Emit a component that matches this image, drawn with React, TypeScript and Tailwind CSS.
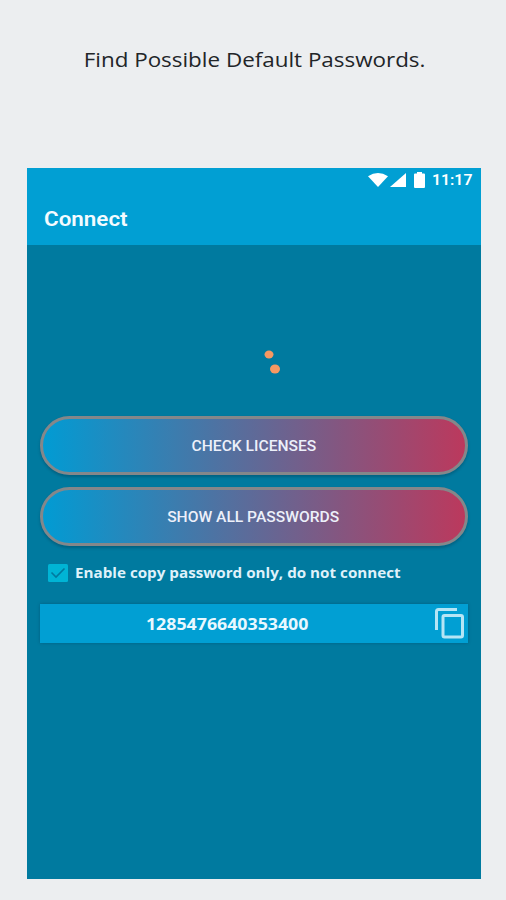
const StatusBar = () => {
  return (
    <div className="flex h-6 items-center justify-end pr-2 text-white">
      <svg width="20" height="14" viewBox="0 0 20 14" fill="currentColor">
        <path d="M0 3.2Q10 -3 20 3.2L10 14Z" />
      </svg>
      <svg
        className="ml-0.5"
        width="16"
        height="14"
        viewBox="0 0 16 14"
        fill="currentColor"
      >
        <path d="M0 14L16 0V14Z" />
      </svg>
      <svg
        className="ml-2"
        width="11"
        height="16"
        viewBox="0 0 11 16"
        fill="currentColor"
      >
        <path d="M3 0H8V1.5H10Q11 1.5 11 2.5V15Q11 16 10 16H1Q0 16 0 15V2.5Q0 1.5 1 1.5H3Z" />
      </svg>
      <span className="ml-[7px] w-[41px] origin-left scale-x-[1.09] pt-0.5 text-[14.5px] leading-6 font-semibold whitespace-nowrap">
        11:17
      </span>
    </div>
  );
};

const GradientButton = ({ text }: { text: string }) => {
  return (
    <button className="h-[59px] w-full rounded-full border-[3px] border-[#84878a] bg-linear-to-r/srgb from-[#009cd4] to-[#bd385c] bg-origin-border pt-0.5 text-[14px] font-medium text-[#edf0fa] shadow-[0_2px_3px_rgba(0,40,60,0.3)]">
      <span className="inline-block scale-x-[1.115]">{text}</span>
    </button>
  );
};

const App = () => {
  return (
    <div className="flex h-[900px] w-[506px] flex-col bg-[#eceef0] font-['Roboto',sans-serif]">
      <h1 className="h-[74px] pt-[46px] pl-[3px] text-center font-['Open_Sans',sans-serif] text-[20px] leading-7 text-[#222528]">
        <span className="inline-block scale-x-[1.12] whitespace-nowrap">
          Find Possible Default Passwords.
        </span>
      </h1>

      <div className="mt-[94px] ml-[26.5px] h-[711px] w-[454px] bg-[#007a9f]">
        <header className="h-[77px] bg-[#019fd3]">
          <StatusBar />
          <h2 className="pt-[13px] pl-[17px] text-[20px] leading-7 font-semibold text-[#f3fbff]">
            <span className="inline-block origin-left scale-x-[1.12]">
              Connect
            </span>
          </h2>
        </header>

        <main className="px-[13px]">
          <div className="flex h-[171px] justify-center pt-[104px] pl-[38px]">
            <svg width="18" height="26" viewBox="0 0 18 26" fill="#f79862">
              <ellipse cx="5" cy="5.5" rx="4.5" ry="4" />
              <ellipse cx="11" cy="20" rx="5" ry="4.5" />
            </svg>
          </div>

          <div className="flex flex-col gap-3">
            <GradientButton text="CHECK LICENSES" />
            <GradientButton text="SHOW ALL PASSWORDS" />
          </div>

          <label className="mt-4 flex h-6 items-start pl-2">
            <svg
              className="mt-0.5"
              width="20"
              height="18"
              viewBox="0 0 20 18"
            >
              <rect width="20" height="18" rx="1.5" fill="#00b4d5" />
              <path
                d="M3.5 8.5L8 13L16.5 4.5"
                fill="none"
                stroke="#007a9f"
                strokeWidth="1.6"
              />
            </svg>
            <span className="ml-[7px] origin-left scale-x-[1.086] font-['Open_Sans',sans-serif] text-[14px] leading-[22px] font-bold whitespace-nowrap text-[#dff1fa]">
              Enable copy password only, do not connect
            </span>
          </label>

          <div className="mt-[18px] flex h-[39px] items-center bg-[#019fd3] pr-1 shadow-[0_0_3px_rgba(0,50,80,0.35)]">
            <span className="flex-1 pr-5 text-center font-['Open_Sans',sans-serif] text-[16px] font-bold text-[#e9f8ff]">
              <span className="inline-block scale-x-[1.11]">
                1285476640353400
              </span>
            </span>
            <svg
              width="29"
              height="31"
              viewBox="0 0 29 31"
              fill="none"
              stroke="#b5e5f5"
              strokeWidth="3"
            >
              <path d="M1.5 22V3.5Q1.5 1.5 3.5 1.5H22" />
              <rect x="8" y="7.5" width="19.5" height="21.5" rx="1.5" />
            </svg>
          </div>
        </main>
      </div>
    </div>
  );
};

export default App;
